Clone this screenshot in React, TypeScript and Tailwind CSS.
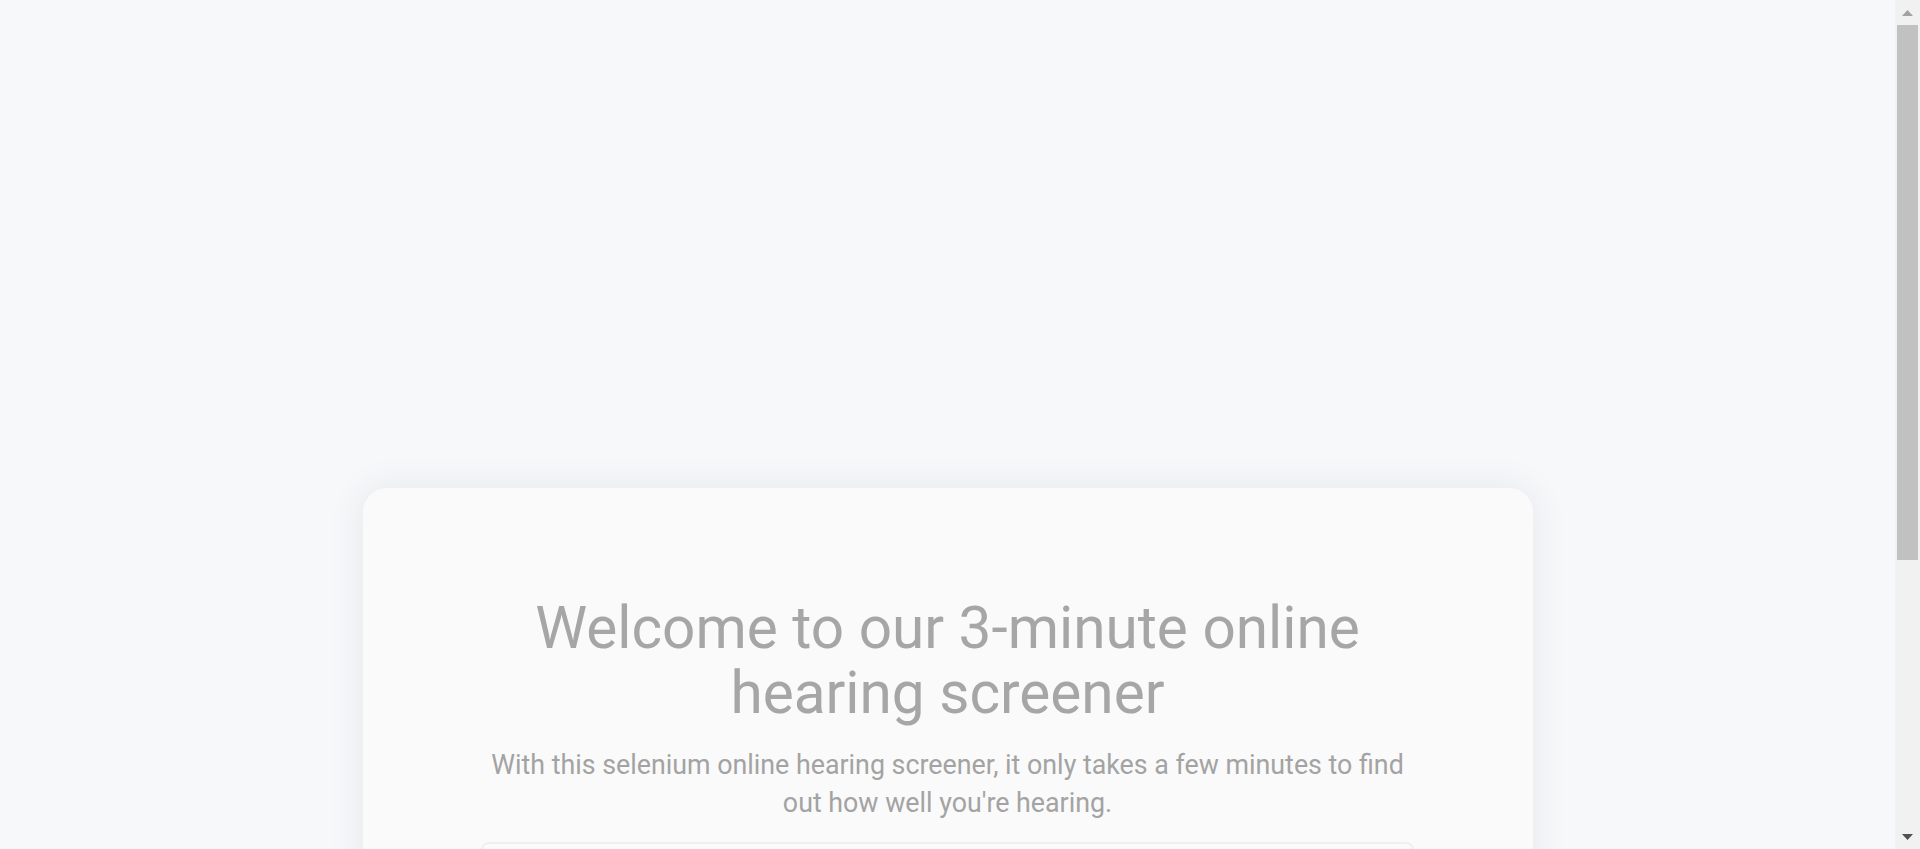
function ScrollTrack() {
  // imitation of the classic browser scrollbar seen in the screenshot
  return (
    <aside className="sticky top-0 flex h-screen w-[25px] shrink-0 flex-col bg-[#f1f1f1]">
      <div className="flex h-[25px] items-center justify-center">
        <svg width="11" height="6" viewBox="0 0 11 6">
          <polygon points="5.5,0 11,6 0,6" fill="#a3a3a3" />
        </svg>
      </div>
      <div className="flex-1 px-[2px]">
        <div className="h-[535px] bg-[#c1c1c1]" />
      </div>
      <div className="flex h-[25px] items-center justify-center">
        <svg width="11" height="6" viewBox="0 0 11 6">
          <polygon points="0,0 11,0 5.5,6" fill="#505050" />
        </svg>
      </div>
    </aside>
  )
}

export default function App() {
  return (
    <div className="flex min-h-screen bg-[#f7f8fa] font-['Roboto',_'Liberation_Sans',_sans-serif]">
      <main className="flex flex-1 justify-center px-4 pt-[488px] pb-[60px]">
        <section className="w-[1170px] rounded-3xl bg-[#fafafa] px-[117px] pt-[108px] pb-[80px] shadow-[0_0_36px_rgba(40,50,70,0.09)]">
          <div className="mx-auto flex w-[936px] flex-col items-center text-center">
            <h1 className="text-[58.5px] leading-[65px] font-normal text-[#a6a6a6]">
              Welcome to our 3-minute online hearing screener
            </h1>
            <p className="mt-[20px] text-[26.8px] leading-[38px] text-[#a3a3a3]">
              With this selenium online hearing screener, it only takes a few minutes to find out how well you're hearing.
            </p>
            <div className="mt-[20px] h-[240px] w-[933px] rounded-lg border-2 border-[#f0f0f0] bg-[#fbfbfb]" />
          </div>
        </section>
      </main>
      <ScrollTrack />
    </div>
  )
}
